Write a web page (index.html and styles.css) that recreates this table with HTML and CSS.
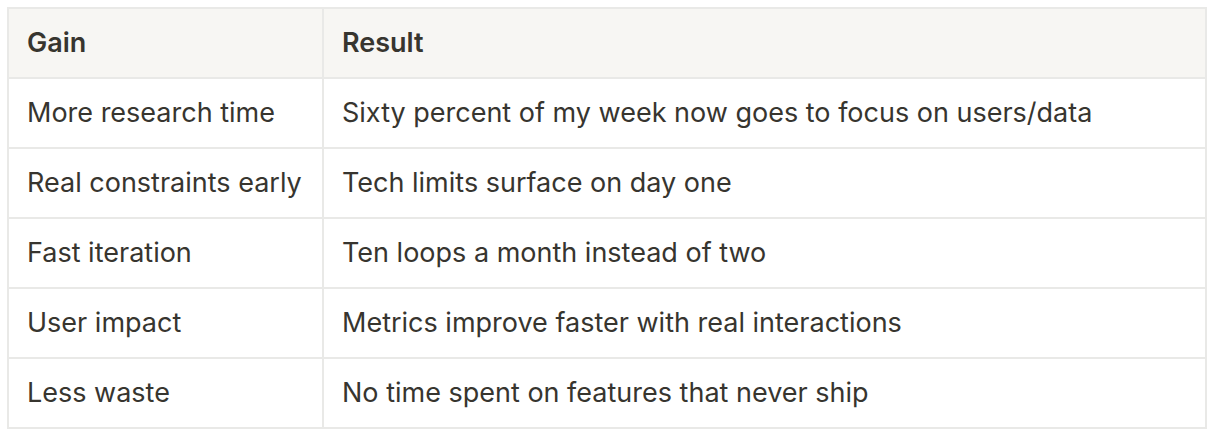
FILE: index.html
```html
<!DOCTYPE html>
<html>
<head>
<meta charset="utf-8">
<link rel="stylesheet" href="styles.css">
</head>
<body>
<table class="tbl">
  <colgroup><col class="c1"><col class="c2"></colgroup>
  <thead>
    <tr><th>Gain</th><th>Result</th></tr>
  </thead>
  <tbody>
    <tr><td>More research time</td><td>Sixty percent of my week now goes to focus on users/data</td></tr>
    <tr><td>Real constraints early</td><td>Tech limits surface on day one</td></tr>
    <tr><td>Fast iteration</td><td>Ten loops a month instead of two</td></tr>
    <tr><td>User impact</td><td>Metrics improve faster with real interactions</td></tr>
    <tr><td>Less waste</td><td>No time spent on features that never ship</td></tr>
  </tbody>
</table>
</body>
</html>
```
FILE: styles.css
```css
html, body { margin: 0; padding: 0; background: #ffffff; }
body { padding: 7px; font-family: Inter, "Noto Sans", sans-serif; color: #37352f; }
.tbl { border-collapse: collapse; width: 1200px; table-layout: fixed; }
.c1 { width: 315px; }
.tbl th, .tbl td {
  border: 2px solid #e9e9e7;
  height: 68px;
  padding: 0 18px;
  text-align: left;
  vertical-align: middle;
  font-size: 27px;
  line-height: 32px;
  white-space: nowrap;
}
.tbl th { background: #f7f6f3; font-weight: 600; }
.tbl td { font-weight: 400; }
```
